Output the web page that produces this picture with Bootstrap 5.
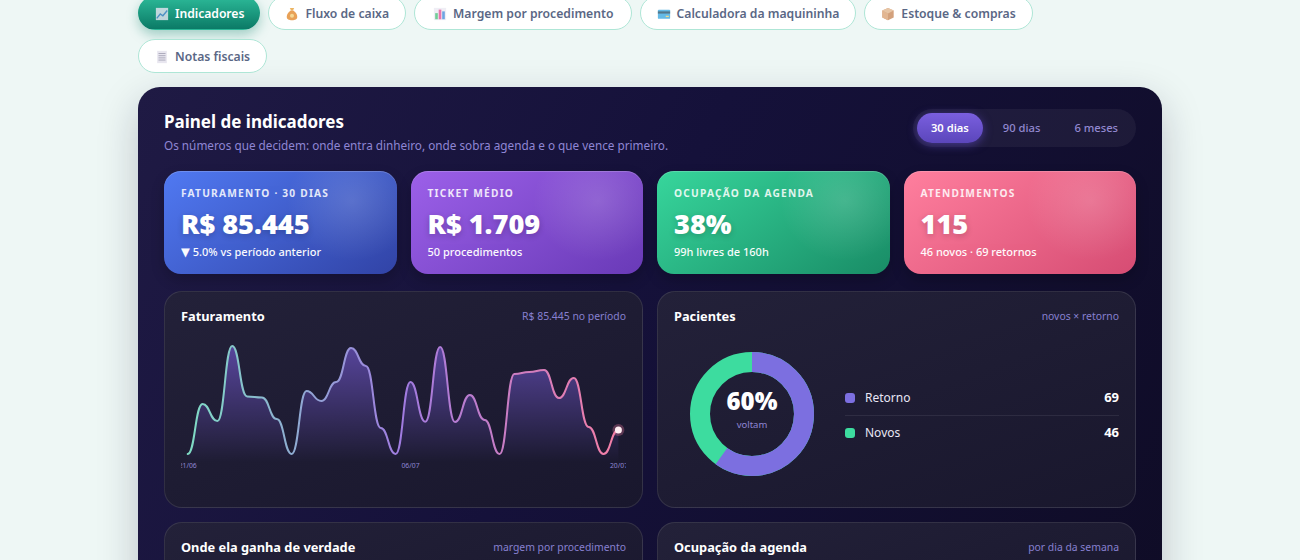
<!DOCTYPE html>
<html lang="pt-BR">
<head>
<meta charset="utf-8">
<title>Painel de indicadores</title>
<link href="https://cdn.jsdelivr.net/npm/bootstrap@5.3.0/dist/css/bootstrap.min.css" rel="stylesheet">
<style>
html,body{overflow:hidden;height:560px}
body{background:#eef7f5;font-family:"Noto Sans","Open Sans","Liberation Sans",sans-serif;color:#fff}
.shell{width:1024px;margin:-4px auto 0}
.tabbar{gap:9px 8px;margin-bottom:14px}
.tabbtn{height:34px;padding:2px 16px 0;border:1.5px solid #aee6d6;border-radius:18px;background:#fff;color:#5a6785;font-size:12.2px;font-weight:600;gap:6px;line-height:1}
.tabbtn svg{width:14px;height:14px;opacity:.8;flex:none}
.tabbtn.on{padding:2px 15px 0 16px;background:linear-gradient(180deg,#2cb998,#0b7a66);border-color:transparent;color:#fff;box-shadow:0 5px 12px rgba(14,130,105,.35);letter-spacing:-.05px}
.tabbtn.wide{padding:2px 17px 0 18px}
.panel{background:linear-gradient(120deg,#1f1a44 0%,#15113a 45%,#0f0c26 100%);border-radius:22px;padding:23px 26px 40px;box-shadow:0 14px 40px rgba(20,16,50,.22);height:520px}
.ptitle{font-size:17px;font-weight:700;line-height:24px;margin:0 0 2px}
.psub{font-size:11.75px;color:#8f86d4;line-height:18px;margin:0}
.seg{background:rgba(255,255,255,.05);border-radius:20px;padding:4px;height:38px;gap:6px;margin-top:-1px}
.segbtn{height:30px;padding:0 14px;border:0;border-radius:16px;background:transparent;color:#9288d0;font-size:11.2px;font-weight:500}
.segbtn.on{color:#fff;font-weight:600;background:linear-gradient(180deg,#7a5fdf,#5b46bb);box-shadow:0 2px 10px rgba(110,85,225,.5)}
.headrow{margin-bottom:17px}
.gridset{--bs-gutter-x:14px;--bs-gutter-y:14px}
.kpirow{margin-bottom:17px}
.kpi{height:103px;border-radius:17px;padding:15px 17px;position:relative;overflow:hidden;box-shadow:inset 0 1px 0 rgba(255,255,255,.18),0 6px 14px rgba(0,0,0,.2)}
.kpi::after{content:"";position:absolute;right:-20px;top:-30px;width:130px;height:120px;background:radial-gradient(closest-side,rgba(255,255,255,.15),rgba(255,255,255,0));}
.k1{background:linear-gradient(145deg,#5079f2,#3143a6)}
.k2{background:linear-gradient(145deg,#9c60e9,#693ab7)}
.k3{background:linear-gradient(145deg,#37d69c,#198c66)}
.k4{background:linear-gradient(145deg,#ff7f9e,#d64c73)}
.klabel{font-size:10.2px;font-weight:700;letter-spacing:1.2px;text-transform:uppercase;opacity:.85;line-height:15px}
.kvalue{font-size:27.2px;font-weight:900;line-height:34px;margin-top:6px;text-shadow:0 2px 6px rgba(0,0,0,.2);white-space:nowrap}
.ksub{font-size:11px;font-weight:500;opacity:.97;line-height:16px;margin-top:3px;white-space:nowrap}
.tri{font-family:"DejaVu Sans",sans-serif;font-size:11.5px}
.pcard{background:linear-gradient(160deg,#232139,#19172d);border:1px solid rgba(255,255,255,.1);border-radius:18px;padding:14px 16px;height:217px}
.pcard.tall{height:120px}
.ctitle{font-size:12.8px;font-weight:700;line-height:20px}
.cnote{font-size:10.4px;color:#8780d0;line-height:20px}
.linechart{display:block;width:445px;height:136px;margin-top:10px}
.linechart text{font-size:6.8px;fill:#8f86d4;font-family:"Noto Sans",sans-serif}
.donutblock{margin-top:26px}
.donutwrap{width:124px;height:124px;position:relative;flex:none;margin-left:16px}
.donutmid{position:absolute;inset:0;display:flex;flex-direction:column;align-items:center;justify-content:center;padding-bottom:10px}
.dpct{font-size:24px;font-weight:900;line-height:30px}
.dlab{font-size:9.5px;color:#8f86d4;line-height:14px;margin-top:2px}
.leg{flex:1;margin-left:31px;margin-top:2px}
.legrow{height:35px;gap:10px;font-size:12px;color:#e8e6f5}
.legrow+.legrow{border-top:1px solid rgba(255,255,255,.08)}
.swatch{width:10px;height:10px;border-radius:3px;flex:none}
.sw-a{background:#7c6fe0}
.sw-b{background:#3ddc9f}
.legval{margin-left:auto;font-weight:700;color:#fff;font-size:13px}
</style>
</head>
<body>
<div class="shell">
  <nav class="d-flex flex-wrap tabbar">
    <button class="tabbtn on btn d-inline-flex align-items-center"><svg viewBox="0 0 16 16"><rect x="1" y="1" width="14" height="14" fill="#e9e6f4"/><path d="M2 13 6 8l3 2 5-6" fill="none" stroke="#5b8fd6" stroke-width="1.6"/></svg>Indicadores</button>
    <button class="tabbtn btn d-inline-flex align-items-center"><svg viewBox="0 0 16 16"><path d="M5.5 1h5l-1.4 3h-2.2z" fill="#e8a33d"/><path d="M6.5 4h3c3 2 4.5 4.5 4.5 7 0 3-2.500 4-6 4s-6-1-6-4c0-2.500 1.500-5 4.500-7z" fill="#e38a2e"/><circle cx="8" cy="10" r="2.300" fill="#f5cf7a"/></svg>Fluxo de caixa</button>
    <button class="tabbtn wide btn d-inline-flex align-items-center"><svg viewBox="0 0 16 16"><rect x="1" y="1" width="14" height="14" fill="#eceaf3"/><rect x="2.500" y="7" width="3" height="7" fill="#4ec27f"/><rect x="6.500" y="3" width="3" height="11" fill="#e6559a"/><rect x="10.500" y="5" width="3" height="9" fill="#4a8fdc"/></svg>Margem por procedimento</button>
    <button class="tabbtn btn d-inline-flex align-items-center"><svg viewBox="0 0 16 16"><rect x="1" y="3" width="14" height="10.500" rx="1" fill="#3fa9e0"/><rect x="1" y="5" width="14" height="2.500" fill="#29566f"/><rect x="10" y="10" width="3.500" height="1.500" fill="#f1d26a"/></svg>Calculadora da maquininha</button>
    <button class="tabbtn btn d-inline-flex align-items-center"><svg viewBox="0 0 16 16"><path d="M8 1l6.500 3v8L8 15l-6.500-3V4z" fill="#c98a5c"/><path d="M8 7.500V15l-6.500-3V4z" fill="#dba477"/><path d="M8 1l6.500 3L8 7.500 1.500 4z" fill="#e2b78f"/></svg>Estoque &amp; compras</button>
    <button class="tabbtn btn d-inline-flex align-items-center"><svg viewBox="0 0 16 16"><rect x="2.500" y="1" width="11" height="14" fill="#e3e1ec"/><path d="M4 4h8M4 6.500h8M4 9h8M4 11.500h8" stroke="#8f8da3" stroke-width="1"/></svg>Notas fiscais</button>
  </nav>

  <main class="panel">
    <header class="d-flex justify-content-between align-items-start headrow">
      <div>
        <h1 class="ptitle">Painel de indicadores</h1>
        <p class="psub">Os números que decidem: onde entra dinheiro, onde sobra agenda e o que vence primeiro.</p>
      </div>
      <div class="seg d-flex">
        <button class="segbtn on">30 dias</button>
        <button class="segbtn">90 dias</button>
        <button class="segbtn">6 meses</button>
      </div>
    </header>

    <div class="row gridset kpirow">
      <div class="col-3"><div class="kpi k1"><div class="klabel">Faturamento · 30 dias</div><div class="kvalue">R$ 85.445</div><div class="ksub"><span class="tri">▼</span> 5.0% vs período anterior</div></div></div>
      <div class="col-3"><div class="kpi k2"><div class="klabel">Ticket médio</div><div class="kvalue">R$ 1.709</div><div class="ksub">50 procedimentos</div></div></div>
      <div class="col-3"><div class="kpi k3"><div class="klabel">Ocupação da agenda</div><div class="kvalue">38%</div><div class="ksub">99h livres de 160h</div></div></div>
      <div class="col-3"><div class="kpi k4"><div class="klabel">Atendimentos</div><div class="kvalue">115</div><div class="ksub">46 novos · 69 retornos</div></div></div>
    </div>

    <div class="row gridset">
      <div class="col-6">
        <section class="pcard">
          <div class="d-flex justify-content-between"><div class="ctitle">Faturamento</div><div class="cnote">R$ 85.445 no período</div></div>
          <svg class="linechart" viewBox="181 336 445 136">
            <defs>
              <linearGradient id="strokeGrad" gradientUnits="userSpaceOnUse" x1="187" y1="0" x2="618" y2="0"><stop offset="0" stop-color="#7fdcc4"/><stop offset=".5" stop-color="#a07be0"/><stop offset="1" stop-color="#f57fa6"/></linearGradient>
              <linearGradient id="areaGrad" gradientUnits="userSpaceOnUse" x1="0" y1="346" x2="0" y2="462"><stop offset="0" stop-color="#7c5fe0" stop-opacity=".6"/><stop offset="1" stop-color="#7c5fe0" stop-opacity="0"/></linearGradient>
            </defs>
            <path id="areaPath" fill="url(#areaGrad)"/>
            <path id="linePath" fill="none" stroke="url(#strokeGrad)" stroke-width="2" stroke-linecap="round"/>
            <circle cx="618.400" cy="430" r="6" fill="#f57fa6" opacity=".3"/>
            <circle cx="618.400" cy="430" r="3.500" fill="#ffeef3"/>
            <text x="187.700" y="467.500" text-anchor="middle">21/06</text>
            <text x="410.500" y="467.500" text-anchor="middle">06/07</text>
            <text x="619" y="467.500" text-anchor="middle">20/07</text>
          </svg>
        </section>
      </div>
      <div class="col-6">
        <section class="pcard">
          <div class="d-flex justify-content-between"><div class="ctitle">Pacientes</div><div class="cnote">novos × retorno</div></div>
          <div class="d-flex align-items-center donutblock">
            <div class="donutwrap">
              <svg viewBox="0 0 124 124" width="124" height="124">
                <circle cx="62" cy="62" r="52" fill="none" stroke="#3ddc9f" stroke-width="20"/>
                <circle cx="62" cy="62" r="52" fill="none" stroke="#7c6fe0" stroke-width="20" pathLength="100" stroke-dasharray="60 40" transform="rotate(-90 62 62)"/>
              </svg>
              <div class="donutmid"><div class="dpct">60%</div><div class="dlab">voltam</div></div>
            </div>
            <div class="leg">
              <div class="legrow d-flex align-items-center"><span class="swatch sw-a"></span>Retorno<span class="legval">69</span></div>
              <div class="legrow d-flex align-items-center"><span class="swatch sw-b"></span>Novos<span class="legval">46</span></div>
            </div>
          </div>
        </section>
      </div>
      <div class="col-6"><section class="pcard tall"><div class="d-flex justify-content-between"><div class="ctitle">Onde ela ganha de verdade</div><div class="cnote">margem por procedimento</div></div></section></div>
      <div class="col-6"><section class="pcard tall"><div class="d-flex justify-content-between"><div class="ctitle">Ocupação da agenda</div><div class="cnote">por dia da semana</div></div></section></div>
    </div>
  </main>
</div>
<script src="https://cdn.jsdelivr.net/npm/bootstrap@5.3.0/dist/js/bootstrap.bundle.min.js"></script>
<script>
(function(){
  var ys=[454,404,421,346,396.5,397.5,419,454,391,401,382,348,366,428,454,382,421.7,347,422,395,420,454,374,372,370,398,378,427,454,430];
  var step=14.85,x0=187.7,n=ys.length;
  var d="M"+x0+" "+ys[0],c=step*0.5;
  for(var i=0;i<n-1;i++){
    var x=x0+i*step;
    d+=" C"+(x+c).toFixed(2)+" "+ys[i]+" "+(x+step-c).toFixed(2)+" "+ys[i+1]+" "+(x+step).toFixed(2)+" "+ys[i+1];
  }
  document.getElementById("linePath").setAttribute("d",d);
  var xe=x0+(n-1)*step;
  document.getElementById("areaPath").setAttribute("d",d+" L"+xe+" 462 L"+x0+" 462 Z");
})();
</script>
</body>
</html>
